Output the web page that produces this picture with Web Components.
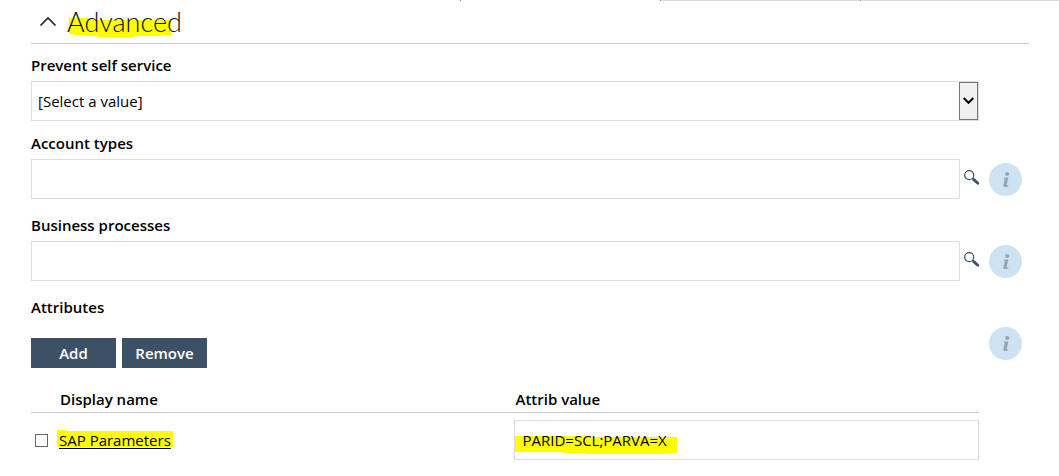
<!DOCTYPE html>
<html lang="en">
<head>
<meta charset="utf-8">
<title>Advanced</title>
<style>
    body {
        margin: 0;
        background: #fff;
        color: #000;
        font: 15px/20px "Open Sans", "Noto Sans", sans-serif;
    }
</style>
</head>
<body>
<tab-edge></tab-edge>
<form-section name="Advanced">
    <form-field type="select" name="Prevent self service" value="[Select a value]"></form-field>
    <form-field type="lookup" name="Account types"></form-field>
    <form-field type="lookup" name="Business processes"></form-field>
    <attribute-list name="Attributes"></attribute-list>
</form-section>

<script>
const makeTemplate = (html) => {
    const template = document.createElement('template');
    template.innerHTML = html;
    return template;
};

// bottom edge of the tab strip, the second tab is the open one
const tabEdgeTemplate = makeTemplate(`
<style>
    :host {
        display: grid;
        grid-template-columns: 461fr 200fr 200fr 198fr;
        height: 1px;
    }
    span { border-right: 1px solid #999; }
    span:nth-of-type(n+3) { background: #dcdcdc; }
    span:last-child { border-right: 0; }
</style>
<span></span><span></span><span></span><span></span>
`);

class TabEdge extends HTMLElement {
    constructor() {
        super();
        this.attachShadow({ mode: 'open' });
        this.shadowRoot.appendChild(tabEdgeTemplate.content.cloneNode(true));
    }
}

// yellow marker stroke behind whatever is slotted
const markerTemplate = makeTemplate(`
<style>
    :host {
        display: inline-block;
        position: relative;
        isolation: isolate;
    }
    svg {
        position: absolute;
        top: 0;
        left: 0;
        z-index: -1;
        width: 1px;
        height: 1px;
        overflow: visible;
        fill: #ff0;
    }
</style>
<svg aria-hidden="true"><path shape-rendering="crispEdges"/></svg>
<slot></slot>
`);

class MarkerStroke extends HTMLElement {
    constructor() {
        super();
        this.attachShadow({ mode: 'open' });
        this.shadowRoot.appendChild(markerTemplate.content.cloneNode(true));
    }
    connectedCallback() {
        this.shadowRoot.querySelector('path').setAttribute('d', this.getAttribute('stroke'));
    }
}

const infoTemplate = makeTemplate(`
<style>
    :host {
        display: block;
        width: 33px;
        height: 33px;
    }
    button {
        display: block;
        width: 100%;
        height: 100%;
        padding: 0;
        border: 0;
        border-radius: 50%;
        background: #cfe2f2;
        cursor: pointer;
    }
    svg { display: block; }
</style>
<button type="button" aria-label="Information">
    <svg width="33" height="33" viewBox="0 0 33 33" fill="#93a6b6">
        <circle cx="18.2" cy="11" r="2.1"/>
        <path d="M15 14.6h4.4l-1.7 7c-.2 1 .6 1 1.7.6l-.3 1.3c-2.6 1.1-5.4.8-4.7-1.8l1.3-5.1c.2-.8-.2-1-1-1z"/>
    </svg>
</button>
`);

class InfoButton extends HTMLElement {
    constructor() {
        super();
        this.attachShadow({ mode: 'open' });
        this.shadowRoot.appendChild(infoTemplate.content.cloneNode(true));
    }
}

const sectionTemplate = makeTemplate(`
<style>
    :host {
        display: block;
        padding: 0 30px 16px 31px;
    }
    header {
        display: flex;
        align-items: center;
        gap: 10px;
        height: 42px;
        padding-left: 8px;
        border-bottom: 1px solid #c8c8c8;
        margin-bottom: 11px;
    }
    button {
        width: 18px;
        height: 42px;
        padding: 0;
        border: 0;
        background: none;
        cursor: pointer;
    }
    svg { display: block; }
    h2 {
        margin: 0;
        color: #111;
        font: 300 27px/32px Lato, "Open Sans", sans-serif;
    }
    .fields {
        display: flex;
        flex-direction: column;
        gap: 16px;
    }
</style>
<header>
    <button type="button" aria-label="Collapse" aria-expanded="true">
        <svg width="18" height="42" viewBox="0 0 18 42" fill="none" stroke="#222" stroke-width="1.6"><path d="M1.5 24.5 9 17l7.5 7.5"/></svg>
    </button>
    <h2><marker-stroke stroke="M2 12H21V14H104V29H95V30H67V31H30V30H18V29H6V28H2Z"><span></span></marker-stroke></h2>
</header>
<div class="fields"><slot></slot></div>
`);

class FormSection extends HTMLElement {
    constructor() {
        super();
        this.attachShadow({ mode: 'open' });
        this.shadowRoot.appendChild(sectionTemplate.content.cloneNode(true));
    }
    connectedCallback() {
        this.shadowRoot.querySelector('h2 span').textContent = this.getAttribute('name');
        const toggle = this.shadowRoot.querySelector('button');
        toggle.addEventListener('click', () => {
            const fields = this.shadowRoot.querySelector('.fields');
            fields.hidden = !fields.hidden;
            fields.style.display = fields.hidden ? 'none' : '';
            toggle.setAttribute('aria-expanded', String(!fields.hidden));
        });
    }
}

const rowStyle = `
    :host {
        display: block;
        padding-right: 7px;
    }
    * { box-sizing: border-box; }
    .label {
        display: block;
        margin-bottom: 6px;
        font-weight: 600;
    }
    .row {
        display: grid;
        grid-template-columns: minmax(0, 1fr) 33px;
        gap: 10px;
        align-items: start;
    }
    info-button { margin-top: 4px; }
    select, input:not([type=checkbox]) {
        width: 100%;
        min-width: 0;
        height: 40px;
        margin: 0;
        border: 1px solid #dedede;
        border-radius: 0;
        background: transparent;
        color: #000;
        font: inherit;
    }
`;

const fieldTemplate = makeTemplate(`
<style>
    ${rowStyle}
    :host([type=select]) { margin-bottom: -4px; }
    select {
        display: block;
        appearance: none;
        padding: 0 26px 0 6px;
    }
    .select { position: relative; }
    .arrow {
        position: absolute;
        top: 1px;
        right: 1px;
        bottom: 1px;
        display: flex;
        align-items: center;
        justify-content: center;
        width: 19px;
        border: 1px solid #777;
        background: #f0f0f0;
        pointer-events: none;
    }
    .lookup {
        display: flex;
        align-items: center;
        gap: 4px;
    }
    .lookup input { flex: 1; padding: 0 7px; }
    .lookup button {
        width: 15px;
        height: 20px;
        padding: 0;
        border: 0;
        background: none;
        cursor: pointer;
    }
    svg { display: block; }
</style>
<label class="label" for="control"></label>
<div class="row"></div>
`);

const controls = {
    select: `
        <div class="select">
            <select id="control"><option></option></select>
            <span class="arrow"><svg width="11" height="8" viewBox="0 0 11 8" fill="none" stroke="#000" stroke-width="2"><path d="M.7 1 5.5 5.8 10.3 1"/></svg></span>
        </div>`,
    lookup: `
        <div class="lookup">
            <input id="control" type="text">
            <button type="button" aria-label="Search">
                <svg width="15" height="20" viewBox="0 0 15 20" fill="none" stroke="#3d5166"><circle cx="5.2" cy="6.2" r="4.5" stroke-width="1.2"/><path d="m8.4 9.4 1.6 1.4" stroke-width="1.4"/><path d="m9.8 10.6 4 3.6" stroke-width="2.8" stroke-linecap="round"/></svg>
            </button>
        </div>
        <info-button></info-button>`
};

class FormField extends HTMLElement {
    constructor() {
        super();
        this.attachShadow({ mode: 'open' });
        this.shadowRoot.appendChild(fieldTemplate.content.cloneNode(true));
    }
    connectedCallback() {
        this.shadowRoot.querySelector('label').textContent = this.getAttribute('name');
        this.shadowRoot.querySelector('.row').innerHTML = controls[this.getAttribute('type')];
        const option = this.shadowRoot.querySelector('option');
        if (option) option.textContent = this.getAttribute('value');
    }
}

const listTemplate = makeTemplate(`
<style>
    ${rowStyle}
    .buttons {
        display: flex;
        gap: 6px;
        padding: 15px 0 20px;
    }
    .buttons button {
        width: 85px;
        height: 30px;
        padding: 0;
        border: 0;
        background: #3d5166;
        color: #fff;
        font: inherit;
        font-weight: 600;
        cursor: pointer;
    }
    table {
        width: 100%;
        table-layout: fixed;
        border-collapse: collapse;
    }
    .pick { width: 28px; }
    .value { width: 49%; }
    thead { border-bottom: 1px solid #c8c8c8; }
    th, td { padding: 0; text-align: left; }
    th { padding: 1px 1px 3px; font-weight: 600; }
    tbody td { padding-top: 7px; }
    input[type=checkbox] {
        display: block;
        appearance: none;
        width: 13px;
        height: 13px;
        margin: 0 4px;
        border: 1px solid #666;
        background: #fff;
    }
    input[type=checkbox]:checked { background: #3d5166; }
    a { color: #000; text-underline-offset: 2px; }
    td marker-stroke.wide { display: block; }
    td input[type=text] { display: block; padding: 0 7px; }
</style>
<span class="label"></span>
<div class="row">
    <div>
        <div class="buttons">
            <button type="button">Add</button>
            <button type="button">Remove</button>
        </div>
        <table>
            <colgroup><col class="pick"><col><col class="value"></colgroup>
            <thead>
                <tr><td></td><th scope="col">Display name</th><th scope="col" id="value">Attrib value</th></tr>
            </thead>
            <tbody>
                <tr>
                    <td><input type="checkbox" aria-labelledby="param"></td>
                    <td><marker-stroke stroke="M-2 0H7V1H114V17H-2Z"><a id="param" href="#">SAP Parameters</a></marker-stroke></td>
                    <td><marker-stroke class="wide" stroke="M1 16H71V17H163V33H152V34H71V33H49V32H1Z"><input type="text" aria-labelledby="value" value="PARID=SCL;PARVA=X"></marker-stroke></td>
                </tr>
            </tbody>
        </table>
    </div>
    <info-button></info-button>
</div>
`);

class AttributeList extends HTMLElement {
    constructor() {
        super();
        this.attachShadow({ mode: 'open' });
        this.shadowRoot.appendChild(listTemplate.content.cloneNode(true));
        this.shadowRoot.querySelector('.label').textContent = this.getAttribute('name');
    }
}

window.customElements.define('tab-edge', TabEdge);
window.customElements.define('marker-stroke', MarkerStroke);
window.customElements.define('info-button', InfoButton);
window.customElements.define('form-section', FormSection);
window.customElements.define('form-field', FormField);
window.customElements.define('attribute-list', AttributeList);
</script>
</body>
</html>
